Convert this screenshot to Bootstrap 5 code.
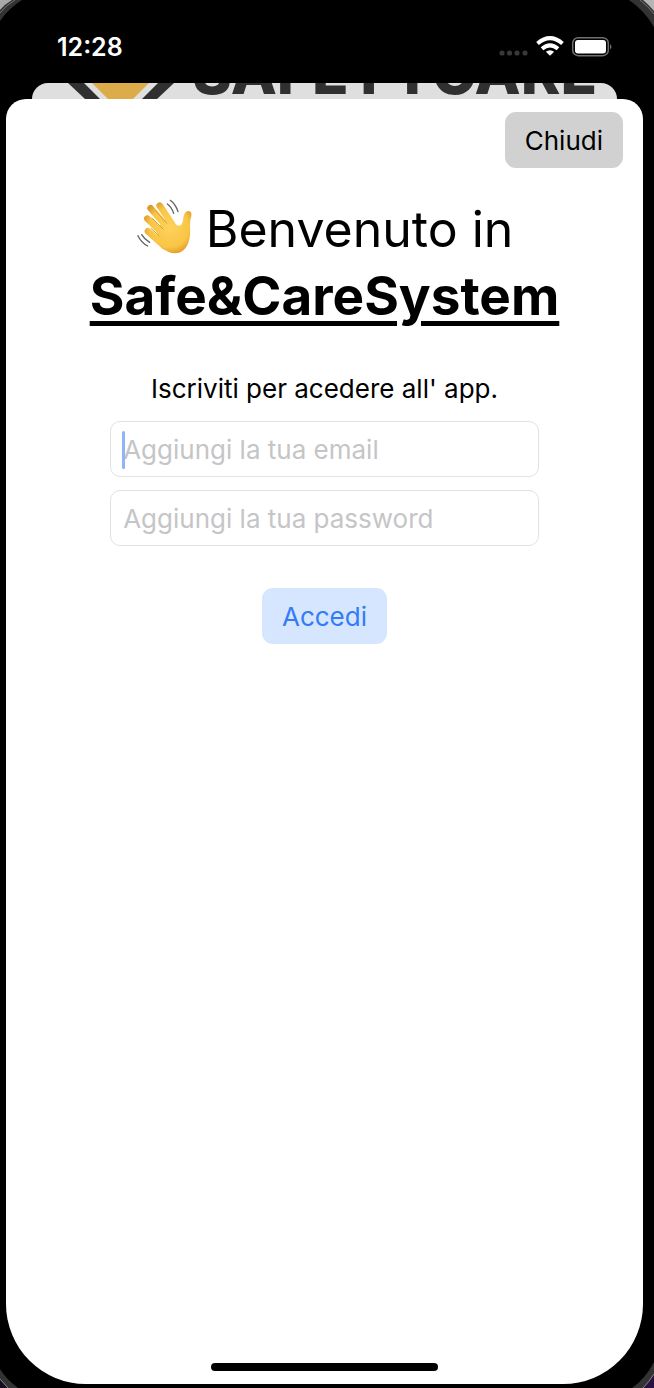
<!DOCTYPE html>
<html lang="it">
<head>
<meta charset="utf-8">
<meta name="viewport" content="width=device-width, initial-scale=1">
<title>Safe&amp;CareSystem</title>
<link href="https://cdn.jsdelivr.net/npm/bootstrap@5.3.0/dist/css/bootstrap.min.css" rel="stylesheet">
<style>
  body { font-family: Inter, "Liberation Sans", sans-serif; font-size: 26px; line-height: 32px; color: #000; background: #000; }
  .phone { padding: 0 11px 4px 6px; }
  .corner { position: absolute; width: 32px; height: 32px; }
  .status-bar { height: 83px; padding: 10px 29px 0 51px; }
  .clock { font-size: 25px; font-weight: 600; }
  .behind { height: 16px; margin: 0 26px; padding: 0 20px 0 28px; background: #dfdfdf; border-radius: 16px 16px 0 0; }
  .brand-name { font-size: 60px; line-height: 54px; font-weight: 800; color: #303030; }
  .sheet { background: #fff; border-radius: 20px 20px 80px 80px; padding: 13px 20px; }
  .soft-btn { --bs-btn-font-size: 26px; --bs-btn-line-height: 32px; --bs-btn-padding-x: 20px; --bs-btn-border-width: 0; --bs-btn-border-radius: 11px; padding-top: 13px; padding-bottom: 11px; }
  .close-btn { --bs-btn-color: #000; --bs-btn-bg: #d1d1d1; --bs-btn-hover-bg: #c4c4c4; }
  .login-btn { --bs-btn-color: #347cf7; --bs-btn-bg: #d6e6fe; --bs-btn-hover-bg: #c4dafc; --bs-btn-hover-color: #347cf7; margin-top: 29px; }
  .welcome { font-size: 50px; line-height: 67px; font-weight: 400; margin: 28px 0 42px; }
  .welcome strong { font-size: 53px; font-weight: 700; text-decoration: underline; text-decoration-thickness: 5px; text-underline-offset: 6px; }
  .wave { width: 56px; height: 56px; vertical-align: -8px; }
  .login { width: 71.8%; max-width: 520px; gap: 13px; }
  .login .intro { margin-bottom: 3px; }
  .login .form-control { font-size: 26px; line-height: 32px; padding: 12px 12px 10px; border: 1px solid #e2e2e2; border-radius: 10px; background: #fff; }
  .login .form-control::placeholder { color: #c5c5c7; opacity: 1; }
  .caret { left: 12px; top: 10px; width: 3px; height: 38px; border-radius: 2px; background: #8fb4fa; }
  .home-bar { width: 227px; height: 8px; border-radius: 4px; background: #000; }
</style>
</head>
<body>
<div class="phone position-relative d-flex flex-column min-vh-100 overflow-hidden">
  <svg class="corner top-0 start-0" viewBox="0 0 32 32" aria-hidden="true"><path d="M0 0H22Q9 8 0 21Z" fill="#333"/><path d="M0 0H12Q5 4 0 10Z" fill="#a9a9a9"/><path d="M15 0Q6 5 0 13" fill="none" stroke="#777"/></svg>
  <svg class="corner top-0 end-0" viewBox="0 0 32 32" aria-hidden="true"><path d="M32 0H7Q22 10 32 27Z" fill="#333"/><path d="M32 0H21Q27 5 32 11Z" fill="#b5b5b5"/><path d="M18 0Q26 6 32 14" fill="none" stroke="#777"/></svg>
  <svg class="corner bottom-0 start-0" viewBox="0 0 32 32" aria-hidden="true"><path d="M0 32V13Q6 23 18 32Z" fill="#333"/><path d="M0 32V23L8 32Z" fill="#160d20"/><path d="M0 23L8 32" stroke="#888"/></svg>
  <svg class="corner bottom-0 end-0" viewBox="0 0 32 32" aria-hidden="true"><path d="M32 32V6Q24 22 10 32Z" fill="#333"/><path d="M32 32V18Q27 26 21 32Z" fill="#2b1042"/><path d="M32 18Q27 26 21 32" fill="none" stroke="#888"/></svg>

  <header class="status-bar d-flex justify-content-between align-items-center">
    <span class="clock text-white">12:28</span>
    <svg width="116" height="24" viewBox="0 0 116 24" role="img" aria-label="Wi-Fi, batteria carica">
      <g fill="#383838"><circle cx="4" cy="18" r="2.6"/><circle cx="11.500" cy="18" r="2.600"/><circle cx="19" cy="18" r="2.600"/><circle cx="27" cy="18" r="2.600"/></g>
      <g fill="none" stroke="#fff" stroke-width="4"><path d="M39.500 8.500Q52-2.300 64.500 8.500"/><path d="M44 13.700Q52 7 60 13.700"/></g>
      <path d="M47.900 16.800Q52 13.700 56.100 16.800L52 20.800Z" fill="#fff"/>
      <rect x="74.700" y="2.700" width="35.600" height="18" rx="5.500" fill="none" stroke="#707070" stroke-width="1.500"/>
      <rect x="77" y="5" width="31" height="13.500" rx="3" fill="#fff"/>
      <path d="M112 9Q115 11.800 112 14.600Z" fill="#707070"/>
    </svg>
  </header>

  <div class="behind d-flex justify-content-between align-items-end overflow-hidden" aria-hidden="true">
    <svg class="align-self-start flex-shrink-0" width="116" height="16" viewBox="0 0 116 16"><path d="M8 0H24L40 16H25ZM98 0H114L97 16H82Z" fill="#303030"/><path d="M32 0H89L73 16H48Z" fill="#dbac49"/></svg>
    <span class="brand-name flex-shrink-0">SAFETYCARE</span>
  </div>

  <main class="sheet flex-grow-1 d-flex flex-column align-items-center">
    <button type="button" class="btn soft-btn close-btn align-self-end">Chiudi</button>
    <h1 class="welcome text-center">
      <svg class="wave" viewBox="45 30 168 168" role="img" aria-label="Mano che saluta">
        <defs><radialGradient id="skin" gradientUnits="userSpaceOnUse" cx="145" cy="115" r="85"><stop offset="0" stop-color="#fdd25d"/><stop offset=".7" stop-color="#f9c544"/><stop offset="1" stop-color="#dc962d"/></radialGradient></defs>
        <path d="M109 116L138 84L168 109C180 113 184 106 186 94C188 78 191 67 202 66C213 67 213 77 209 89C205 103 209 117 207 138C204 169 190 193 160 193C142 193 124 178 110 162Z" fill="url(#skin)"/>
        <g fill="none" stroke="url(#skin)" stroke-width="20" stroke-linecap="round"><path d="M89 58L142 119"/><path d="M116 50L153 105"/><path d="M79 89L128 137"/><path d="M81 127L131 172"/></g>
        <g fill="none" stroke="#d99b31" stroke-width="3" stroke-linecap="round"><path d="M104 65L137 103"/><path d="M93 87L126 120"/><path d="M91 119L114 140"/></g>
        <g fill="none" stroke="#626366" stroke-width="4" stroke-linecap="round"><path d="M139 45Q152 54 158 73"/><path d="M148 34Q164 46 171 68"/><path d="M62 137Q70 151 86 160"/><path d="M51 140Q60 160 80 171"/></g>
      </svg>
      Benvenuto in<br><strong>Safe&amp;CareSystem</strong>
    </h1>
    <form class="login d-flex flex-column align-items-center">
      <p class="intro text-center">Iscriviti per acedere all' app.</p>
      <div class="position-relative w-100">
        <input type="email" class="form-control" placeholder="Aggiungi la tua email" aria-label="Email">
        <span class="caret position-absolute" aria-hidden="true"></span>
      </div>
      <input type="password" class="form-control" placeholder="Aggiungi la tua password" aria-label="Password">
      <button type="button" class="btn soft-btn login-btn">Accedi</button>
    </form>
    <div class="home-bar mt-auto"></div>
  </main>
</div>
<script src="https://cdn.jsdelivr.net/npm/bootstrap@5.3.0/dist/js/bootstrap.bundle.min.js"></script>
</body>
</html>
